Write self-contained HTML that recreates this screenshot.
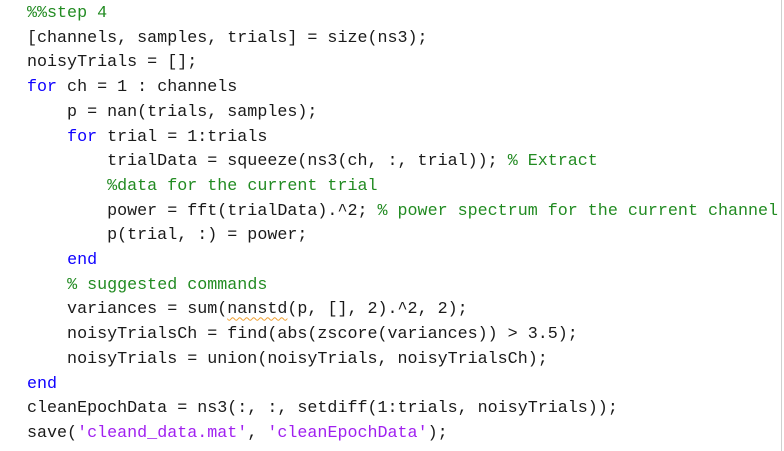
<!DOCTYPE html>
<html><head><meta charset="utf-8"><style>
html,body{margin:0;padding:0;background:#fff;width:784px;height:451px;overflow:hidden;}
pre{margin:0;position:absolute;left:27px;top:2px;font-family:"Liberation Mono",monospace;font-size:16.7px;line-height:24.7px;color:#1a1a1a;}
.c{color:#228b22}.k{color:#0e00ff}.s{color:#a020f0}
.w{text-decoration:underline wavy #f0a030;text-decoration-thickness:1px;text-underline-offset:3px}
.bar{position:absolute;left:781px;top:0;width:1px;height:451px;background:#d0d0d0}
</style></head><body>
<pre><span class="c">%%step 4</span>
[channels, samples, trials] = size(ns3);
noisyTrials = [];
<span class="k">for</span> ch = 1 : channels
    p = nan(trials, samples);
    <span class="k">for</span> trial = 1:trials
        trialData = squeeze(ns3(ch, :, trial)); <span class="c">% Extract</span>
        <span class="c">%data for the current trial</span>
        power = fft(trialData).^2; <span class="c">% power spectrum for the current channel</span>
        p(trial, :) = power;
    <span class="k">end</span>
    <span class="c">% suggested commands</span>
    variances = sum(<span class="w">nanstd</span>(p, [], 2).^2, 2);
    noisyTrialsCh = find(abs(zscore(variances)) &gt; 3.5);
    noisyTrials = union(noisyTrials, noisyTrialsCh);
<span class="k">end</span>
cleanEpochData = ns3(:, :, setdiff(1:trials, noisyTrials));
save(<span class="s">'cleand_data.mat'</span>, <span class="s">'cleanEpochData'</span>);</pre>
<div class="bar"></div>
</body></html>
